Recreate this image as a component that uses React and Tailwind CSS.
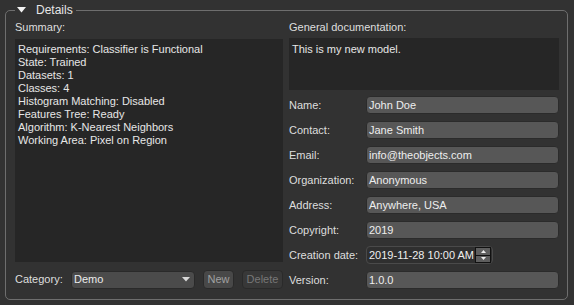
import React from 'react'

const summary = [
  'Requirements: Classifier is Functional',
  'State: Trained',
  'Datasets: 1',
  'Classes: 4',
  'Histogram Matching: Disabled',
  'Features Tree: Ready',
  'Algorithm: K-Nearest Neighbors',
  'Working Area: Pixel on Region',
]

const fields = [
  ['Name:', 'John Doe'],
  ['Contact:', 'Jane Smith'],
  ['Email:', 'info@theobjects.com'],
  ['Organization:', 'Anonymous'],
  ['Address:', 'Anywhere, USA'],
  ['Copyright:', '2019'],
]

const Field = ({ label, value }) => (
  <div className="flex items-center h-[18px]">
    <span className="w-[77px] shrink-0">{label}</span>
    <div className="flex-1 h-[18px] rounded-[4px] bg-[#575757] border border-[#2b2b2b] px-[2px] leading-[16px] text-[#eeeeee]">
      {value}
    </div>
  </div>
)

export default function App() {
  return (
    <div
      className="w-[574px] h-[305px] bg-[#323232] text-[11px] text-[#dedede] overflow-hidden pt-[3px]"
      style={{ fontFamily: '"Liberation Sans", Arial, sans-serif' }}
    >
      <fieldset className="ml-[5px] w-[563px] h-[297px] border border-[#6e6e6e] rounded-[5px] pl-[9px] pr-[8px]">
        <legend className="px-[1px] h-[14px] leading-[14px] flex items-center">
          <svg width="9" height="6" viewBox="0 0 9 6" className="ml-[1px] mr-[10px]">
            <polygon points="0,0 9,0 4.5,5.5" fill="#f2f2f2" />
          </svg>
          <span className="text-[12px] text-[#e6e6e6] mr-[2px]">Details</span>
        </legend>

        <div className="grid grid-cols-[268px_270px] gap-x-[6px] mt-[3px]">
          {/* left column */}
          <div className="flex flex-col">
            <div className="h-[14px] leading-[14px]">Summary:</div>
            <div className="mt-[5px] h-[223px] bg-[#262626] px-[3px] pt-[4px] leading-[13px] text-[#e6e6e6]">
              {summary.map((s) => (
                <div key={s}>{s}</div>
              ))}
            </div>
            <div className="mt-[8px] flex items-center h-[19px]">
              <span className="w-[56px] shrink-0">Category:</span>
              <div className="w-[124px] h-[18px] rounded-[4px] bg-[#4b4b4b] border border-[#2a2a2a] flex items-center pl-[2px] pr-[4px] text-[#ececec]">
                <span className="flex-1">Demo</span>
                <svg width="8" height="5" viewBox="0 0 8 5">
                  <polygon points="0,0 8,0 4,4.5" fill="#d8d8d8" />
                </svg>
              </div>
              <button className="ml-[8px] w-[31px] h-[19px] rounded-[4px] bg-[#484848] border border-[#2a2a2a] text-[#a0a0a0] leading-[17px] text-center">
                New
              </button>
              <button className="ml-[8px] w-[41px] h-[19px] rounded-[4px] bg-[#383838] border border-[#2a2a2a] text-[#777777] leading-[17px] text-center">
                Delete
              </button>
            </div>
          </div>

          {/* right column */}
          <div className="flex flex-col">
            <div className="h-[14px] leading-[14px]">General documentation:</div>
            <div className="mt-[4px] h-[52px] bg-[#262626] px-[3px] pt-[5px] leading-[13px] text-[#e6e6e6]">
              This is my new model.
            </div>
            <div className="mt-[6px] flex flex-col gap-[7px]">
              {fields.map(([l, v]) => (
                <Field key={l} label={l} value={v} />
              ))}
              <div className="flex items-center h-[18px]">
                <span className="w-[77px] shrink-0">Creation date:</span>
                <div className="w-[127px] h-[18px] rounded-[4px] bg-[#2f2f2f] border border-[#4a4a4a] flex items-center pl-[2px] pr-[1px] text-[#eeeeee] whitespace-nowrap">
                  <span className="flex-1">2019-11-28 10:00 AM</span>
                  <div className="flex flex-col gap-[1px] w-[16px] h-[16px] bg-[#111111] p-[1px]">
                    <div className="flex-1 bg-[#5e5e5e] flex items-center justify-center">
                      <svg width="5" height="3" viewBox="0 0 5 3"><polygon points="2.5,0 5,3 0,3" fill="#eeeeee" /></svg>
                    </div>
                    <div className="flex-1 bg-[#5e5e5e] flex items-center justify-center">
                      <svg width="5" height="3" viewBox="0 0 5 3"><polygon points="0,0 5,0 2.5,3" fill="#eeeeee" /></svg>
                    </div>
                  </div>
                </div>
              </div>
              <Field label="Version:" value="1.0.0" />
            </div>
          </div>
        </div>
      </fieldset>
    </div>
  )
}
